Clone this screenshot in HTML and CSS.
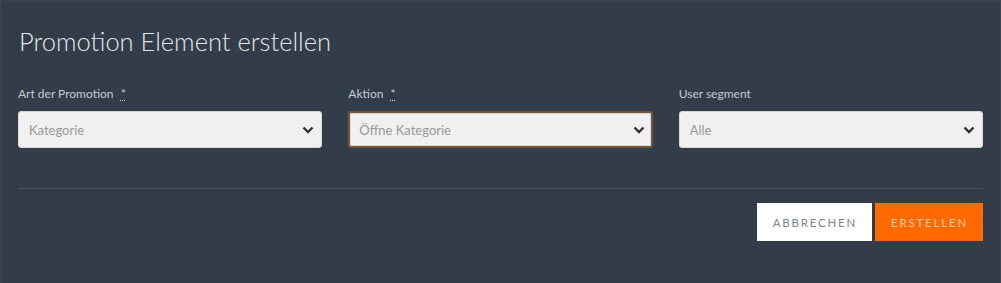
FILE: index.html
```html
<html>

<head>
  <link rel="stylesheet" href="styles.css">
</head>

<body>
  <div class="modal">
    <h2 class="modal-title">Promotion Element erstellen</h2>

    <form class="promo-form">
      <div class="field-row">
        <div class="field">
          <label class="field-label">Art der Promotion <abbr title="Pflichtfeld">*</abbr></label>
          <div class="select-wrap">
            <select class="select">
              <option>Kategorie</option>
            </select>
            <svg class="chevron" width="12" height="8" viewBox="0 0 12 8">
              <path d="M1.5 1.5 L6 6 L10.5 1.5" fill="none" stroke="#333" stroke-width="2.4" />
            </svg>
          </div>
        </div>

        <div class="field">
          <label class="field-label">Aktion <abbr title="Pflichtfeld">*</abbr></label>
          <div class="select-wrap">
            <select class="select is-focused">
              <option>Öffne Kategorie</option>
            </select>
            <svg class="chevron" width="12" height="8" viewBox="0 0 12 8">
              <path d="M1.5 1.5 L6 6 L10.5 1.5" fill="none" stroke="#333" stroke-width="2.4" />
            </svg>
          </div>
        </div>

        <div class="field">
          <label class="field-label">User segment</label>
          <div class="select-wrap">
            <select class="select">
              <option>Alle</option>
            </select>
            <svg class="chevron" width="12" height="8" viewBox="0 0 12 8">
              <path d="M1.5 1.5 L6 6 L10.5 1.5" fill="none" stroke="#333" stroke-width="2.4" />
            </svg>
          </div>
        </div>
      </div>

      <div class="modal-footer">
        <button type="button" class="btn btn-light">Abbrechen</button>
        <button type="button" class="btn btn-primary">Erstellen</button>
      </div>
    </form>
  </div>
</body>

</html>
```

FILE: styles.css
```css
body {
  margin: 0;
  background-color: #3c444d;
  font-family: Lato, "Open Sans", sans-serif;
}

.modal {
  box-sizing: border-box;
  height: 282px;
  margin: 1px 1px 0 1px;
  padding: 23px 17px 0 17px;
  background-color: #323d49;
  color: #dfe3e7;
}

.modal-title {
  margin: 0 0 28px 1px;
  font-size: 25.5px;
  font-weight: 300;
  line-height: 34px;
  color: #e4e7ea;
}

.field-row {
  display: grid;
  grid-template-columns: 1fr 1fr 1fr;
  gap: 26px;
}

.field-label {
  display: block;
  margin-bottom: 10px;
  font-size: 12px;
  line-height: 15px;
  color: #c5cbd1;
}

.field-label abbr {
  margin-left: 4px;
  text-decoration: underline dotted;
  text-underline-offset: 2px;
}

/* native select without its own arrow, chevron drawn on top */
.select-wrap {
  position: relative;
}

.select {
  -webkit-appearance: none;
  appearance: none;
  box-sizing: border-box;
  width: 100%;
  height: 37px;
  padding: 0 30px 0 10px;
  border: 1px solid #d8d8d8;
  border-radius: 3px;
  background: #f0f0f0;
  font-family: inherit;
  font-size: 13px;
  color: #999;
  outline: none;
}

.select.is-focused {
  border: 2px solid #75553a;
  box-shadow: inset 0 0 0 1px #e0d6cc;
  padding-left: 9px;
}

.chevron {
  position: absolute;
  right: 8px;
  top: 15px;
  pointer-events: none;
}

.modal-footer {
  display: flex;
  justify-content: flex-end;
  gap: 3px;
  margin-top: 40px;
  padding-top: 14px;
  border-top: 1px solid #46515c;
}

.btn {
  height: 38px;
  border: none;
  border-radius: 0;
  font-family: inherit;
  font-size: 11.5px;
  letter-spacing: 1.8px;
  text-transform: uppercase;
  cursor: pointer;
}

.btn-light {
  padding: 0 15px 0 16px;
  background: #fff;
  color: #7d848c;
}

.btn-primary {
  padding: 0 15px 0 16px;
  background: #ff6a00;
  color: #ffd0ac;
}
```
